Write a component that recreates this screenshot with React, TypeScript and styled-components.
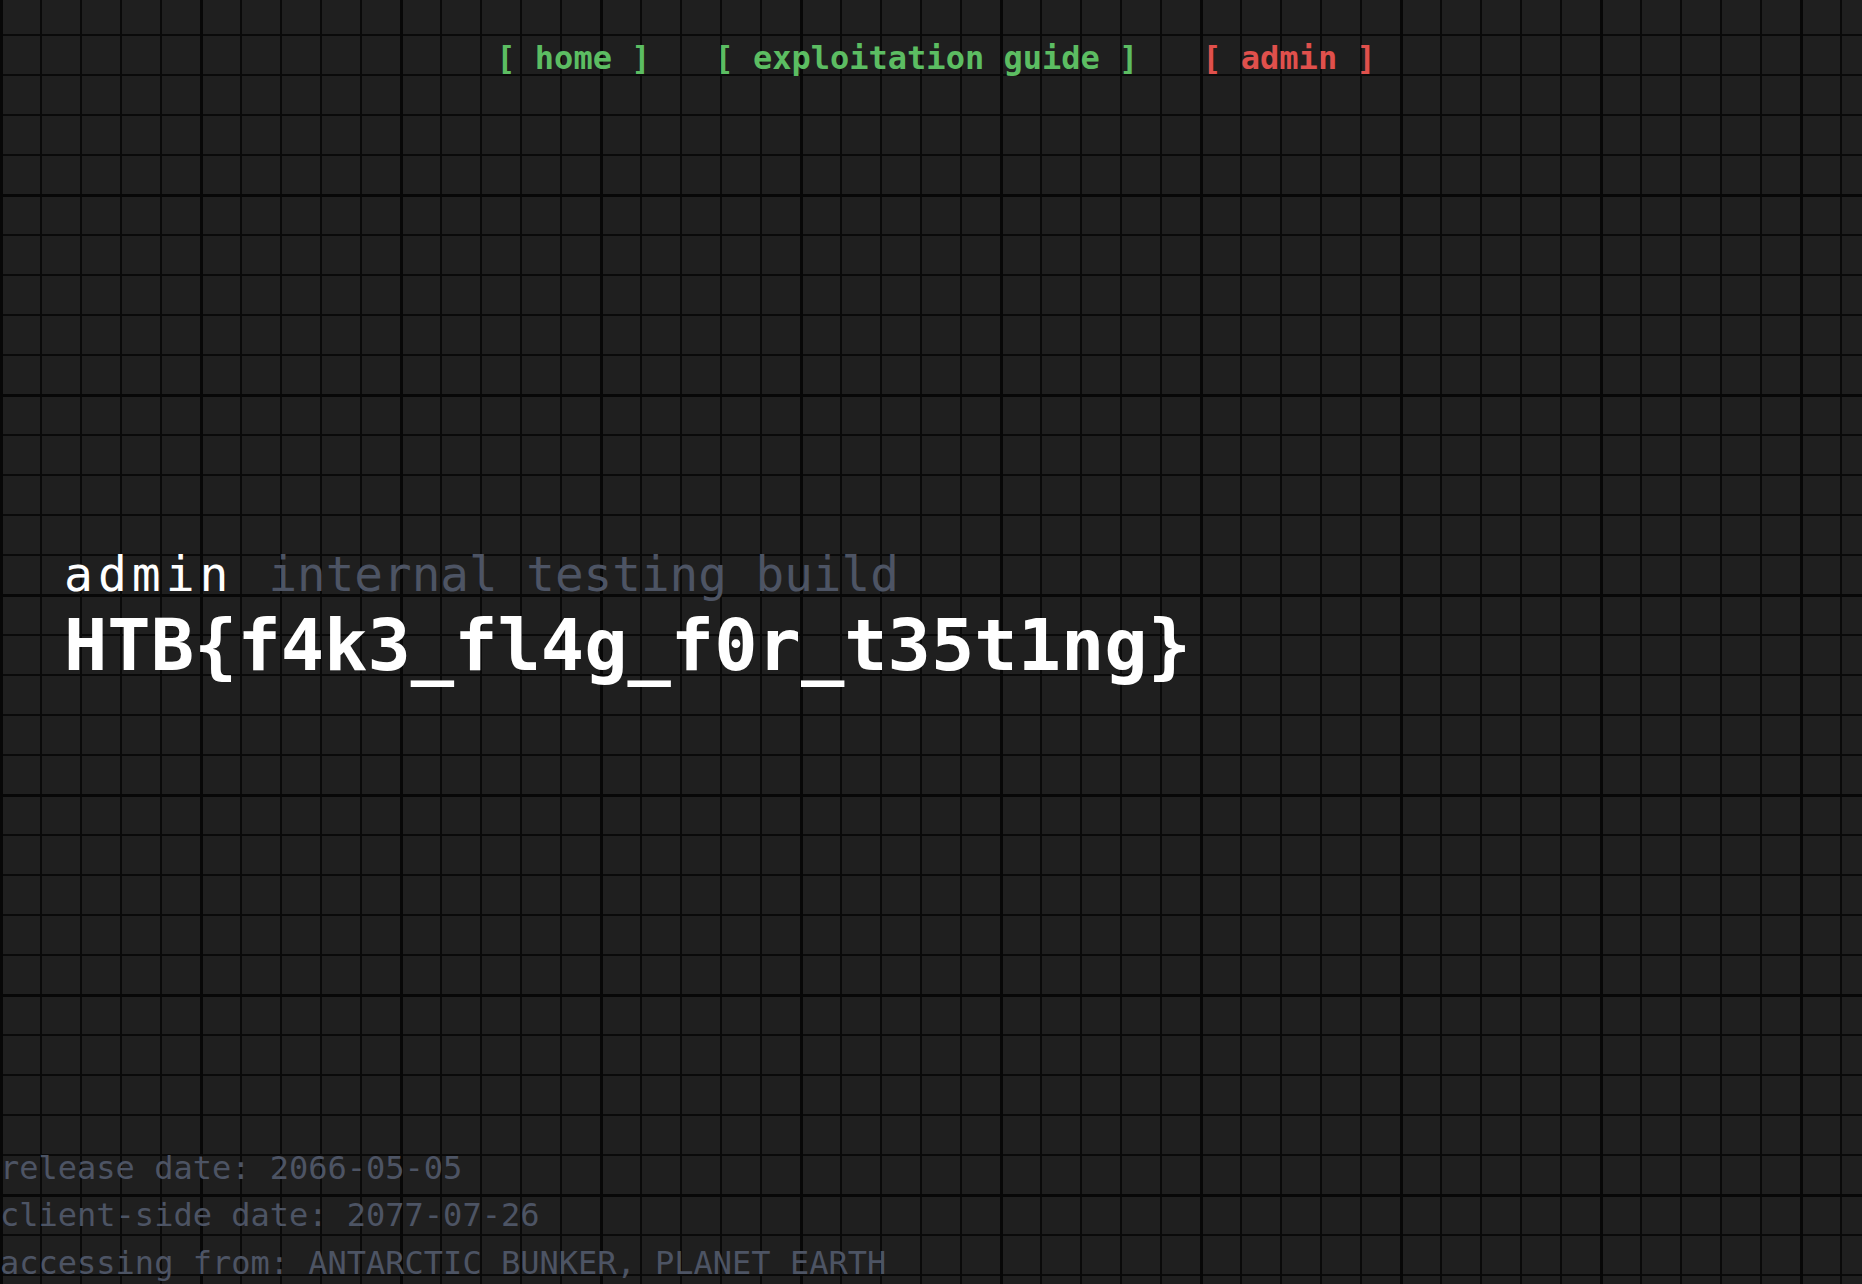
import React from "react";
import styled, { createGlobalStyle } from "styled-components";

const GlobalStyle = createGlobalStyle`
  html, body {
    margin: 0;
    padding: 0;
    background: #1f1f1f;
  }
  body {
    font-family: "DejaVu Sans Mono", "Liberation Mono", monospace;
    color: #ffffff;
    overflow: hidden;
  }
`;

const Page = styled.div`
  height: 100vh;
  display: flex;
  flex-direction: column;
  background-color: #1f1f1f;
  background-image:
    linear-gradient(to right, #070707 0 3px, transparent 3px),
    linear-gradient(to bottom, #070707 0 3px, transparent 3px),
    linear-gradient(to right, #0a0a0a 0 2px, transparent 2px),
    linear-gradient(to bottom, #0a0a0a 0 2px, transparent 2px);
  background-size: 200px 200px, 200px 200px, 40px 40px, 40px 40px;
  background-position: 0 -6px;
`;

const Nav = styled.nav`
  display: flex;
  justify-content: center;
  gap: 64px;
  padding: 39px 0 0 10px;
`;

const NavLink = styled.a<{ $active?: boolean }>`
  font-family: "DejaVu Sans Mono", monospace;
  font-weight: bold;
  font-size: 32px;
  line-height: 39px;
  text-decoration: none;
  color: ${(p) => (p.$active ? "#e0504c" : "#5cbd62")};
  white-space: pre;
  cursor: pointer;
`;

const Main = styled.main`
  flex: 1;
  display: flex;
  flex-direction: column;
  justify-content: center;
  padding: 10px 62px 0 64px;
`;

const Subtitle = styled.div`
  font-size: 48px;
  line-height: 56px;
  white-space: pre;
`;

const Admin = styled.span`
  color: #ffffff;
  letter-spacing: 5px;
`;

const Muted = styled.span`
  color: #4d5464;
  margin-left: 6px;
  font-size: 47.6px;
`;

const Flag = styled.h1`
  margin: 0;
  font-size: 72px;
  line-height: 84px;
  font-weight: bold;
  color: #ffffff;
`;

const Footer = styled.footer`
  display: flex;
  flex-direction: column;
  margin-bottom: -3px;
  color: #4d5464;
  font-size: 32px;
  line-height: 47.5px;
  white-space: pre;
`;

export default function App() {
  return (
    <>
      <GlobalStyle />
      <Page>
        <Nav>
          <NavLink>[ home ]</NavLink>
          <NavLink>[ exploitation guide ]</NavLink>
          <NavLink $active>[ admin ]</NavLink>
        </Nav>
        <Main>
          <Subtitle>
            <Admin>admin</Admin> <Muted>internal testing build</Muted>
          </Subtitle>
          <Flag>HTB&#123;f4k3_fl4g_f0r_t35t1ng&#125;</Flag>
        </Main>
        <Footer>
          <span>release date: 2066-05-05</span>
          <span>client-side date: 2077-07-26</span>
          <span>accessing from: ANTARCTIC BUNKER, PLANET EARTH</span>
        </Footer>
      </Page>
    </>
  );
}
